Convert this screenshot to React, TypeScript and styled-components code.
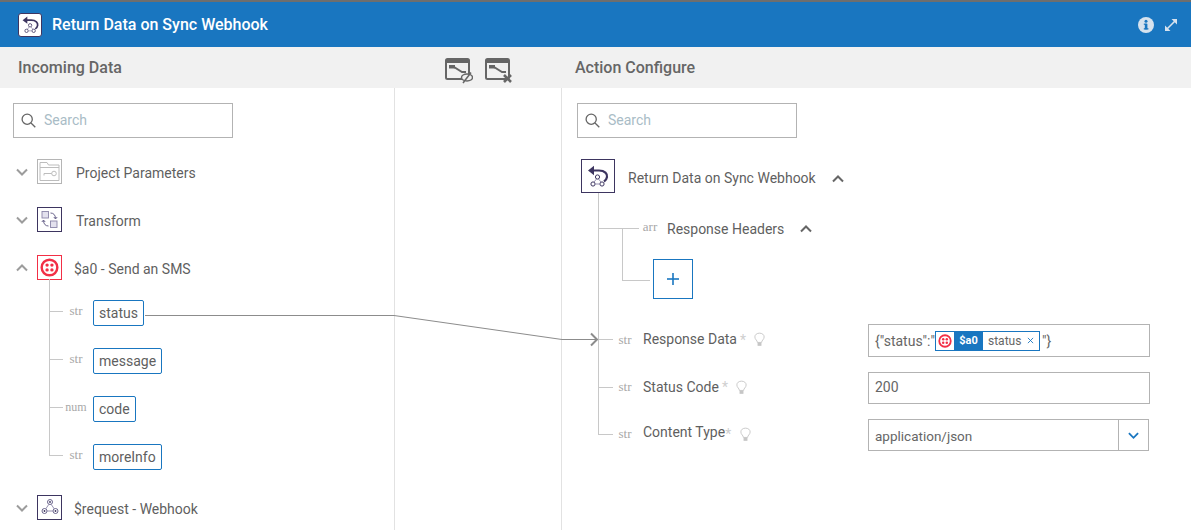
import React from 'react';
import styled, { createGlobalStyle } from 'styled-components';

const GlobalStyle = createGlobalStyle`
  html, body {
    margin: 0;
    padding: 0;
    background: #fff;
    font-family: Roboto, "Liberation Sans", sans-serif;
    font-size: 14px;
    color: #5f5f5f;
  }
  * {
    box-sizing: border-box;
  }
`;

const Frame = styled.div`
  position: relative;
  width: 1191px;
  height: 530px;
  overflow: hidden;
`;

const Header = styled.header`
  height: 47px;
  border-top: 2px solid #6e6e6e;
  background: #1976c0;
  color: #fff;
  display: flex;
  align-items: center;
  padding: 0 13px 0 18px;
`;

const HeaderLogo = styled.div`
  width: 24px;
  height: 24px;
  background: #fff;
  border: 1px solid #3d3560;
  border-radius: 3px;
  display: flex;
  align-items: center;
  justify-content: center;
  margin-right: 10px;
`;

const HeaderTitle = styled.h1`
  flex: 1;
  margin: 0;
  font-size: 16px;
  font-weight: 500;
  line-height: 20px;
`;

const HeaderTools = styled.div`
  display: flex;
  align-items: center;
  gap: 10px;
`;

const SubHeader = styled.div`
  height: 41px;
  background: #f1f1f1;
  display: grid;
  grid-template-columns: 445px 117px 1fr;
  align-items: center;
  font-size: 16px;
  font-weight: 500;
  color: #666;
`;

const SubTitle = styled.div<{ $indent: number }>`
  padding-left: ${({ $indent }) => $indent}px;
`;

const LinkTools = styled.div`
  display: flex;
  gap: 12px;
  padding-top: 7px;
`;

const Columns = styled.div`
  display: grid;
  grid-template-columns: 394px 168px 1fr;
  height: 442px;
`;

const Panel = styled.section`
  padding: 15px 0 0 13px;
`;

const RightPanel = styled(Panel)`
  padding-left: 15px;
`;

const MiddlePanel = styled.div`
  border-left: 1px solid #e2e2e2;
  border-right: 1px solid #e2e2e2;
`;

const SearchBox = styled.div`
  width: 220px;
  height: 35px;
  border: 1px solid #b3b3b3;
  display: flex;
  align-items: center;
  gap: 8px;
  padding-left: 7px;
  color: #a9bcc6;
`;

const SearchHint = styled.span`
  position: relative;
  top: -1px;
`;

const NodeRow = styled.div<{ $gap?: number }>`
  height: 48px;
  display: flex;
  align-items: center;
  margin-left: 3px;
  margin-top: ${({ $gap }) => $gap ?? 0}px;
`;

const NodeBox = styled.div<{ $color: string }>`
  width: 25px;
  height: 25px;
  border: 1px solid ${({ $color }) => $color};
  display: flex;
  align-items: center;
  justify-content: center;
  margin: -2px 0 0 9px;
`;

const NodeLabel = styled.span<{ $indent: number }>`
  margin: 2px 0 0 ${({ $indent }) => $indent}px;
  line-height: 20px;
`;

const ChildRow = styled.div`
  position: relative;
  height: 48px;
  display: flex;
  align-items: center;
  margin-left: 23px;

  &::before {
    content: '';
    position: absolute;
    left: 13px;
    top: 0;
    bottom: 0;
    width: 1px;
    background: #c8c8c8;
  }

  &::after {
    content: '';
    position: absolute;
    left: 13px;
    top: 22px;
    width: 14px;
    height: 1px;
    background: #c8c8c8;
  }

  &:first-child::before {
    top: -10px;
  }

  &:last-child::before {
    bottom: 25px;
  }
`;

const ChildList = styled.div`
  margin-top: -3px;
  margin-bottom: 3px;
`;

const TypeTag = styled.span<{ $small?: boolean }>`
  font-family: "Liberation Serif", serif;
  font-size: ${({ $small }) => ($small ? 12 : 13)}px;
  color: #a8a8a8;
  width: 24px;
  text-align: center;
  line-height: 14px;
  position: relative;
  top: -2px;
`;

const ChildType = styled(TypeTag)`
  margin-left: 28px;
  margin-right: 2px;
`;

const DataChip = styled.div`
  height: 26px;
  border: 1px solid #1976c0;
  border-radius: 2px;
  padding: 0 5px;
  display: flex;
  align-items: center;
  background: #fff;
  color: #5f5f5f;
  margin-left: 3px;
`;

const ActionRow = styled.div`
  display: flex;
  align-items: center;
  margin: 21px 0 0 4px;

  > svg {
    margin-top: 5px;
  }
`;

const ActionBox = styled.div`
  width: 34px;
  height: 34px;
  border: 1px solid #3d3560;
  display: flex;
  align-items: center;
  justify-content: center;
`;

const ActionLabel = styled.span`
  margin: 3px 16px 0 13px;
`;

const ActionTree = styled.div`
  position: relative;
  padding-top: 12px;

  &::before {
    content: '';
    position: absolute;
    left: 21px;
    top: 0;
    height: 241px;
    width: 1px;
    background: #c8c8c8;
  }
`;

const BranchRow = styled.div`
  position: relative;
  height: 48px;
  display: flex;
  align-items: center;

  &::after {
    content: '';
    position: absolute;
    left: 21px;
    top: 23px;
    width: 41px;
    height: 1px;
    background: #c8c8c8;
  }

  svg {
    margin-left: 16px;
  }
`;

const BranchType = styled(TypeTag)`
  margin-left: 61px;
  margin-right: 5px;
`;

const AddBlock = styled.div`
  position: relative;
  margin: 6px 0 25px 76px;
  width: 40px;
  height: 40px;
  border: 1px solid #1976c0;
  display: flex;
  align-items: center;
  justify-content: center;
  color: #1976c0;

  &::before {
    content: '';
    position: absolute;
    left: -32px;
    top: -31px;
    width: 27px;
    height: 51px;
    border-left: 1px solid #c8c8c8;
    border-bottom: 1px solid #c8c8c8;
  }
`;

const FieldRow = styled.div<{ $tall?: boolean }>`
  position: relative;
  height: ${({ $tall }) => ($tall ? 33 : 32)}px;
  margin-bottom: 15px;
  display: flex;
  align-items: center;

  &::after {
    content: '';
    position: absolute;
    left: 21px;
    top: 15px;
    width: 15px;
    height: 1px;
    background: #c8c8c8;
  }
`;

const FieldLabel = styled.div`
  width: 291px;
  display: flex;
  align-items: center;

  svg {
    position: relative;
    top: -1px;
  }
`;

const FieldType = styled(TypeTag)`
  margin-left: 36px;
  margin-right: 6px;
  top: -1px;
`;

const LabelText = styled.span<{ $lift: number }>`
  position: relative;
  top: ${({ $lift }) => -$lift}px;
`;

const Required = styled.span<{ $before?: number; $after: number }>`
  position: relative;
  top: -1px;
  color: #cfcfcf;
  margin: 0 ${({ $after }) => $after}px 0 ${({ $before }) => $before ?? 3}px;
`;

const InputBox = styled.div<{ $width?: number }>`
  width: ${({ $width }) => $width ?? 282}px;
  height: 100%;
  border: 1px solid #b3b3b3;
  display: flex;
  align-items: center;
  padding-left: 6px;
  color: #666;
`;

const InputText = styled.span`
  position: relative;
  top: -1px;
`;

const SelectValue = styled.div`
  flex: 1;
  font-size: 13.5px;
  padding-top: 1px;
`;

const SelectButton = styled.div`
  width: 30px;
  height: 100%;
  border-left: 1px solid #b3b3b3;
  display: flex;
  align-items: center;
  justify-content: center;
`;

const MappedToken = styled.div`
  height: 20px;
  width: 105px;
  border: 1px solid #1976c0;
  display: flex;
  align-items: center;
  margin: 0 2px 0 0;
`;

const TokenIcon = styled.div`
  width: 18px;
  display: flex;
  justify-content: center;
`;

const TokenAlias = styled.div`
  width: 29px;
  height: 100%;
  background: #1976c0;
  color: #fff;
  font-size: 11px;
  font-weight: 700;
  display: flex;
  align-items: center;
  justify-content: center;
`;

const TokenName = styled.span`
  font-size: 12px;
  margin: 0 6px 0 5px;
`;

const TokenClose = styled.svg`
  flex: none;
`;

const WireLayer = styled.svg`
  position: absolute;
  left: 0;
  top: 0;
  pointer-events: none;
`;

const Chevron = ({ up, color = '#9c9c9c', size = 12 }: { up?: boolean; color?: string; size?: number }) => (
  <svg width={size} height={size} viewBox="0 0 12 12" fill="none">
    <polyline
      points={up ? '1,8.5 6,3.5 11,8.5' : '1,3.5 6,8.5 11,3.5'}
      stroke={color}
      strokeWidth="2"
    />
  </svg>
);

const Magnifier = () => (
  <svg width="15" height="15" viewBox="0 0 15 15" fill="none" stroke="#666" strokeWidth="1.3">
    <circle cx="6.2" cy="6.2" r="5.1" />
    <line x1="10" y1="10" x2="14.3" y2="14.3" />
  </svg>
);

const TwilioMark = ({ size = 19 }: { size?: number }) => (
  <svg width={size} height={size} viewBox="0 0 18 18">
    <circle cx="9" cy="9" r="7.4" fill="none" stroke="#f22f46" strokeWidth="2.3" />
    <circle cx="6.7" cy="6.7" r="1.6" fill="#f22f46" />
    <circle cx="11.3" cy="6.7" r="1.6" fill="#f22f46" />
    <circle cx="6.7" cy="11.3" r="1.6" fill="#f22f46" />
    <circle cx="11.3" cy="11.3" r="1.6" fill="#f22f46" />
  </svg>
);

const WebhookMark = ({ size = 18 }: { size?: number }) => (
  <svg width={size} height={size} viewBox="0 0 18 18" fill="none" stroke="#5b5580" strokeWidth="0.9">
    <circle cx="9" cy="4" r="2.5" />
    <circle cx="3.5" cy="13" r="2.5" />
    <circle cx="14.5" cy="13" r="2.5" />
    <path d="M7.8 6.4 L4.8 10.8 M10.2 6.4 L13.2 10.8 M6 13 H12" stroke="#8a85a8" />
    <circle cx="9" cy="4" r="0.9" fill="#3d3560" stroke="none" />
    <circle cx="3.5" cy="13" r="0.9" fill="#3d3560" stroke="none" />
    <circle cx="14.5" cy="13" r="0.9" fill="#3d3560" stroke="none" />
  </svg>
);

const ReturnMark = ({ size = 24 }: { size?: number }) => (
  <svg width={size} height={size} viewBox="0 0 24 24" fill="none" stroke="#3d3560">
    <path d="M5 6.5 H13 C19 6.5 21.5 10 21 13 C20.7 15 19.5 16.5 18 17.5" strokeWidth="2.2" />
    <path d="M8 1.8 L2 6.5 L8 11.2 Z" fill="#3d3560" stroke="none" />
    <circle cx="11.5" cy="13" r="2.1" strokeWidth="1" />
    <circle cx="7" cy="20" r="2.1" strokeWidth="1" />
    <circle cx="16" cy="20" r="2.1" strokeWidth="1" />
    <path d="M10.5 15 L8 18 M12.5 15 L15 18 M9.1 20 H13.9" strokeWidth="0.9" stroke="#8a85a8" />
  </svg>
);

const FolderMark = () => (
  <svg width="23" height="23" viewBox="0 0 23 23" fill="none" stroke="#bdbdbd" strokeWidth="1">
    <path d="M2 20.5 V2.5 H9 L10.5 5 H21 V20.5 Z" />
    <line x1="2" y1="7.5" x2="21" y2="7.5" />
    <circle cx="16" cy="13.5" r="2.3" />
    <path d="M13.7 13.5 H6 V15.5" />
  </svg>
);

const TransformMark = () => (
  <svg width="21" height="21" viewBox="0 0 21 21" fill="none" stroke="#8a85a8" strokeWidth="0.9">
    <rect x="3" y="2.5" width="6.5" height="6.5" fill="#e3e1ee" />
    <rect x="11.5" y="12" width="6.5" height="6.5" fill="#e3e1ee" />
    <path d="M11.5 4 C14.5 4 16.5 6 16.5 9.5 M14.8 8 L16.5 10 L18.2 8" stroke="#5b5580" />
    <path d="M9.5 17 C6.5 17 4.5 15 4.5 11.5 M2.8 13 L4.5 11 L6.2 13" stroke="#5b5580" />
  </svg>
);

const LinkWindow = ({ children }: { children: React.ReactNode }) => (
  <svg width="28" height="26" viewBox="0 0 28 26" fill="none">
    <rect x="1" y="1" width="23" height="20" rx="1.5" stroke="#666" strokeWidth="2" />
    <rect x="1" y="1" width="23" height="4" fill="#666" />
    <rect x="4" y="7" width="6" height="3.5" fill="#666" />
    <path d="M9 9 L17 14 H21" stroke="#666" strokeWidth="2" />
    {children}
  </svg>
);

const BulbMark = () => (
  <svg width="11" height="15" viewBox="0 0 13 17" fill="none" stroke="#c6c6c6" strokeWidth="1.1">
    <path d="M4 12 C4 9.5 1 8.5 1 5.5 C1 2.8 3.4 1 6.5 1 C9.6 1 12 2.8 12 5.5 C12 8.5 9 9.5 9 12 Z" />
    <rect x="4.2" y="12.5" width="4.6" height="3.5" fill="#c6c6c6" stroke="none" />
  </svg>
);

const fields = ['status', 'message', 'code', 'moreInfo'];

const App = () => (
  <Frame>
    <GlobalStyle />
    <Header>
      <HeaderLogo>
        <ReturnMark size={19} />
      </HeaderLogo>
      <HeaderTitle>Return Data on Sync Webhook</HeaderTitle>
      <HeaderTools>
        <svg width="16" height="16" viewBox="0 0 16 16">
          <circle cx="8" cy="8" r="8" fill="#d6e2ee" />
          <rect x="6.8" y="6.8" width="2.6" height="5.6" fill="#1976c0" />
          <rect x="5.8" y="11.2" width="4.6" height="1.3" fill="#1976c0" />
          <rect x="5.8" y="6.6" width="3" height="1.2" fill="#1976c0" />
          <circle cx="8" cy="4.2" r="1.5" fill="#1976c0" />
        </svg>
        <svg width="14" height="14" viewBox="0 0 14 14" fill="none" stroke="#d6e2ee">
          <path d="M3 11 L11 3" strokeWidth="1.6" />
          <path d="M7.5 1 H13 V6.5 Z" fill="#d6e2ee" stroke="none" />
          <path d="M1 7.5 V13 H6.5 Z" fill="#d6e2ee" stroke="none" />
        </svg>
      </HeaderTools>
    </Header>

    <SubHeader>
      <SubTitle $indent={18}>Incoming Data</SubTitle>
      <LinkTools>
        <LinkWindow>
          <ellipse cx="22" cy="19.5" rx="5.5" ry="3.4" fill="#f1f1f1" stroke="#666" strokeWidth="1.5" />
          <line x1="18" y1="25" x2="26" y2="14.5" stroke="#666" strokeWidth="1.5" />
        </LinkWindow>
        <LinkWindow>
          <path d="M19 17 L26 24 M26 17 L19 24" stroke="#666" strokeWidth="2.6" />
        </LinkWindow>
      </LinkTools>
      <SubTitle $indent={13}>Action Configure</SubTitle>
    </SubHeader>

    <Columns>
      <Panel>
        <SearchBox>
          <Magnifier />
          <SearchHint>Search</SearchHint>
        </SearchBox>
        <NodeRow $gap={10}>
          <Chevron />
          <NodeBox $color="#b5b5b5">
            <FolderMark />
          </NodeBox>
          <NodeLabel $indent={14}>Project Parameters</NodeLabel>
        </NodeRow>
        <NodeRow>
          <Chevron />
          <NodeBox $color="#3d3560">
            <TransformMark />
          </NodeBox>
          <NodeLabel $indent={14}>Transform</NodeLabel>
        </NodeRow>
        <NodeRow>
          <Chevron up />
          <NodeBox $color="#f22f46">
            <TwilioMark />
          </NodeBox>
          <NodeLabel $indent={12}>$a0 - Send an SMS</NodeLabel>
        </NodeRow>
        <ChildList>
          {fields.map((field) => (
            <ChildRow key={field}>
              <ChildType $small={field === 'code'}>{field === 'code' ? 'num' : 'str'}</ChildType>
              <DataChip>{field}</DataChip>
            </ChildRow>
          ))}
        </ChildList>
        <NodeRow>
          <Chevron />
          <NodeBox $color="#3d3560">
            <WebhookMark />
          </NodeBox>
          <NodeLabel $indent={12}>$request - Webhook</NodeLabel>
        </NodeRow>
      </Panel>

      <MiddlePanel />

      <RightPanel>
        <SearchBox>
          <Magnifier />
          <SearchHint>Search</SearchHint>
        </SearchBox>
        <ActionRow>
          <ActionBox>
            <ReturnMark />
          </ActionBox>
          <ActionLabel>Return Data on Sync Webhook</ActionLabel>
          <Chevron up color="#666" />
        </ActionRow>
        <ActionTree>
          <BranchRow>
            <BranchType>arr</BranchType>
            <span>Response Headers</span>
            <Chevron up color="#666" />
          </BranchRow>
          <AddBlock>
            <svg width="14" height="14" viewBox="0 0 14 14" stroke="#1976c0" strokeWidth="1.6">
              <line x1="7" y1="1" x2="7" y2="13" />
              <line x1="1" y1="7" x2="13" y2="7" />
            </svg>
          </AddBlock>
          <FieldRow $tall>
            <FieldLabel>
              <FieldType>str</FieldType>
              <LabelText $lift={2}>Response Data</LabelText>
              <Required $after={8}>*</Required>
              <BulbMark />
            </FieldLabel>
            <InputBox>
              {'{"status":"'}
              <MappedToken>
                <TokenIcon>
                  <TwilioMark size={14} />
                </TokenIcon>
                <TokenAlias>$a0</TokenAlias>
                <TokenName>status</TokenName>
                <TokenClose width="7" height="7" viewBox="0 0 8 8" stroke="#1976c0" strokeWidth="1">
                  <path d="M1 1 L7 7 M7 1 L1 7" />
                </TokenClose>
              </MappedToken>
              {'"}'}
            </InputBox>
          </FieldRow>
          <FieldRow>
            <FieldLabel>
              <FieldType>str</FieldType>
              <LabelText $lift={1}>Status Code</LabelText>
              <Required $after={8}>*</Required>
              <BulbMark />
            </FieldLabel>
            <InputBox>
              <InputText>200</InputText>
            </InputBox>
          </FieldRow>
          <FieldRow>
            <FieldLabel>
              <FieldType>str</FieldType>
              <LabelText $lift={3}>Content Type</LabelText>
              <Required $before={0} $after={9}>*</Required>
              <BulbMark />
            </FieldLabel>
            <InputBox $width={281}>
              <SelectValue>application/json</SelectValue>
              <SelectButton>
                <Chevron color="#1976c0" size={11} />
              </SelectButton>
            </InputBox>
          </FieldRow>
        </ActionTree>
      </RightPanel>
    </Columns>

    <WireLayer width="1191" height="530" viewBox="0 0 1191 530" fill="none" stroke="#8c8c8c">
      <polyline points="145,315.5 394,315.5 562,339.5 597,339.5" />
      <polyline points="591,333.5 597,339.5 591,345.5" strokeWidth="2" />
    </WireLayer>
  </Frame>
);

export default App;
